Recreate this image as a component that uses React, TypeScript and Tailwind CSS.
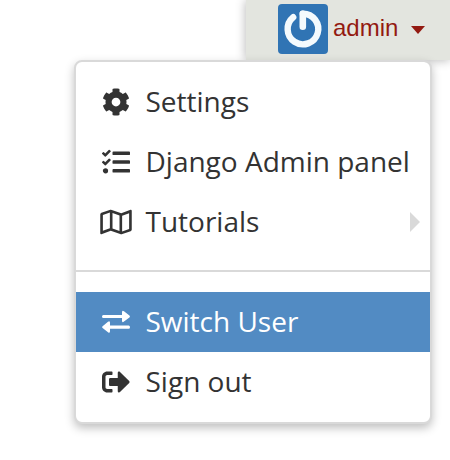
import type { ReactNode } from 'react';
import { FaCog, FaTasks, FaRegMap, FaSignOutAlt } from 'react-icons/fa';

function Avatar() {
  return (
    <svg className="h-[50px] w-[50px] shrink-0 rounded-[4px]" viewBox="0 0 50 50">
      <rect width="50" height="50" fill="#3074b4" />
      <g fill="none" stroke="#f4fafd" strokeWidth="6.4">
        <path d="M15.2 13.2A15.3 15.3 0 1 0 24.8 9.7" strokeLinecap="round" />
        <path d="M24.8 9.7V22.8" strokeWidth="6.6" strokeLinecap="round" />
      </g>
    </svg>
  );
}

function SwitchIcon() {
  return (
    <svg className="h-[28px] w-[28px]" viewBox="0 0 28 28" fill="currentColor">
      <path d="M1.4 7H20V4.2Q20 1.8 22 3.2L27.4 7.6Q28.4 8.5 27.4 9.4L22 13.6Q20 15 20 12.7V10.1H1.4Q0 10.1 0 8.55T1.4 7Z" />
      <path d="M26.6 17.6H8V14.8Q8 12.4 6 13.8L.6 18.2Q-.4 19.1 .6 20L6 24.2Q8 25.6 8 23.3V20.7H26.6Q28 20.7 28 19.15T26.6 17.6Z" />
    </svg>
  );
}

type ItemProps = { icon: ReactNode; label: string; active?: boolean; submenu?: boolean };

function Item({ icon, label, active, submenu }: ItemProps) {
  return (
    <li className={`flex h-[60px] items-center pl-[21.5px] ${active ? 'bg-[#528bc3] text-white' : 'text-[#333333]'}`}>
      <span className="flex w-[36px] shrink-0 items-center justify-center pb-[1px]">{icon}</span>
      <span className="ml-[12px] whitespace-nowrap pb-[2px] text-[28px] leading-[58px]">{label}</span>
      {submenu && (
        <span className="ml-auto mr-[10px] h-0 w-0 border-y-[10px] border-l-[10px] border-y-transparent border-l-[#d9d9d9]" />
      )}
    </li>
  );
}

export default function App() {
  return (
    <div className="relative h-[460px] w-[450px] overflow-hidden bg-white">
      <header className="ml-[246px] flex h-[60px] bg-[#e3e5df] pl-[32px] pt-[4px] shadow-[0_0_10px_rgba(0,0,0,0.3)]">
        <Avatar />
        <span className="ml-[5px] font-['Liberation_Sans',Arial,sans-serif] text-[24px] leading-[48px] text-[#931a11]">admin</span>
        <span className="ml-[13px] mt-[22px] h-0 w-0 border-x-[7px] border-t-[8px] border-x-transparent border-t-[#931a11]" />
      </header>
      <ul className="absolute left-[74px] top-[60px] h-[364px] w-[358px] rounded-[8px] border-2 border-[#d9d9d9] bg-white bg-clip-padding pt-[10px] font-['Open_Sans',sans-serif] shadow-[0_4px_10px_rgba(0,0,0,0.25)]">
        <Item icon={<FaCog size={28} />} label="Settings" />
        <Item icon={<FaTasks size={28} />} label="Django Admin panel" />
        <Item icon={<FaRegMap className="h-[28px] w-[32px]" />} label="Tutorials" submenu />
        <li className="mb-[20px] mt-[18px] h-[2px] bg-[#d9d9d9]" />
        <Item icon={<SwitchIcon />} label="Switch User" active />
        <Item icon={<FaSignOutAlt size={28} />} label="Sign out" />
      </ul>
    </div>
  );
}
